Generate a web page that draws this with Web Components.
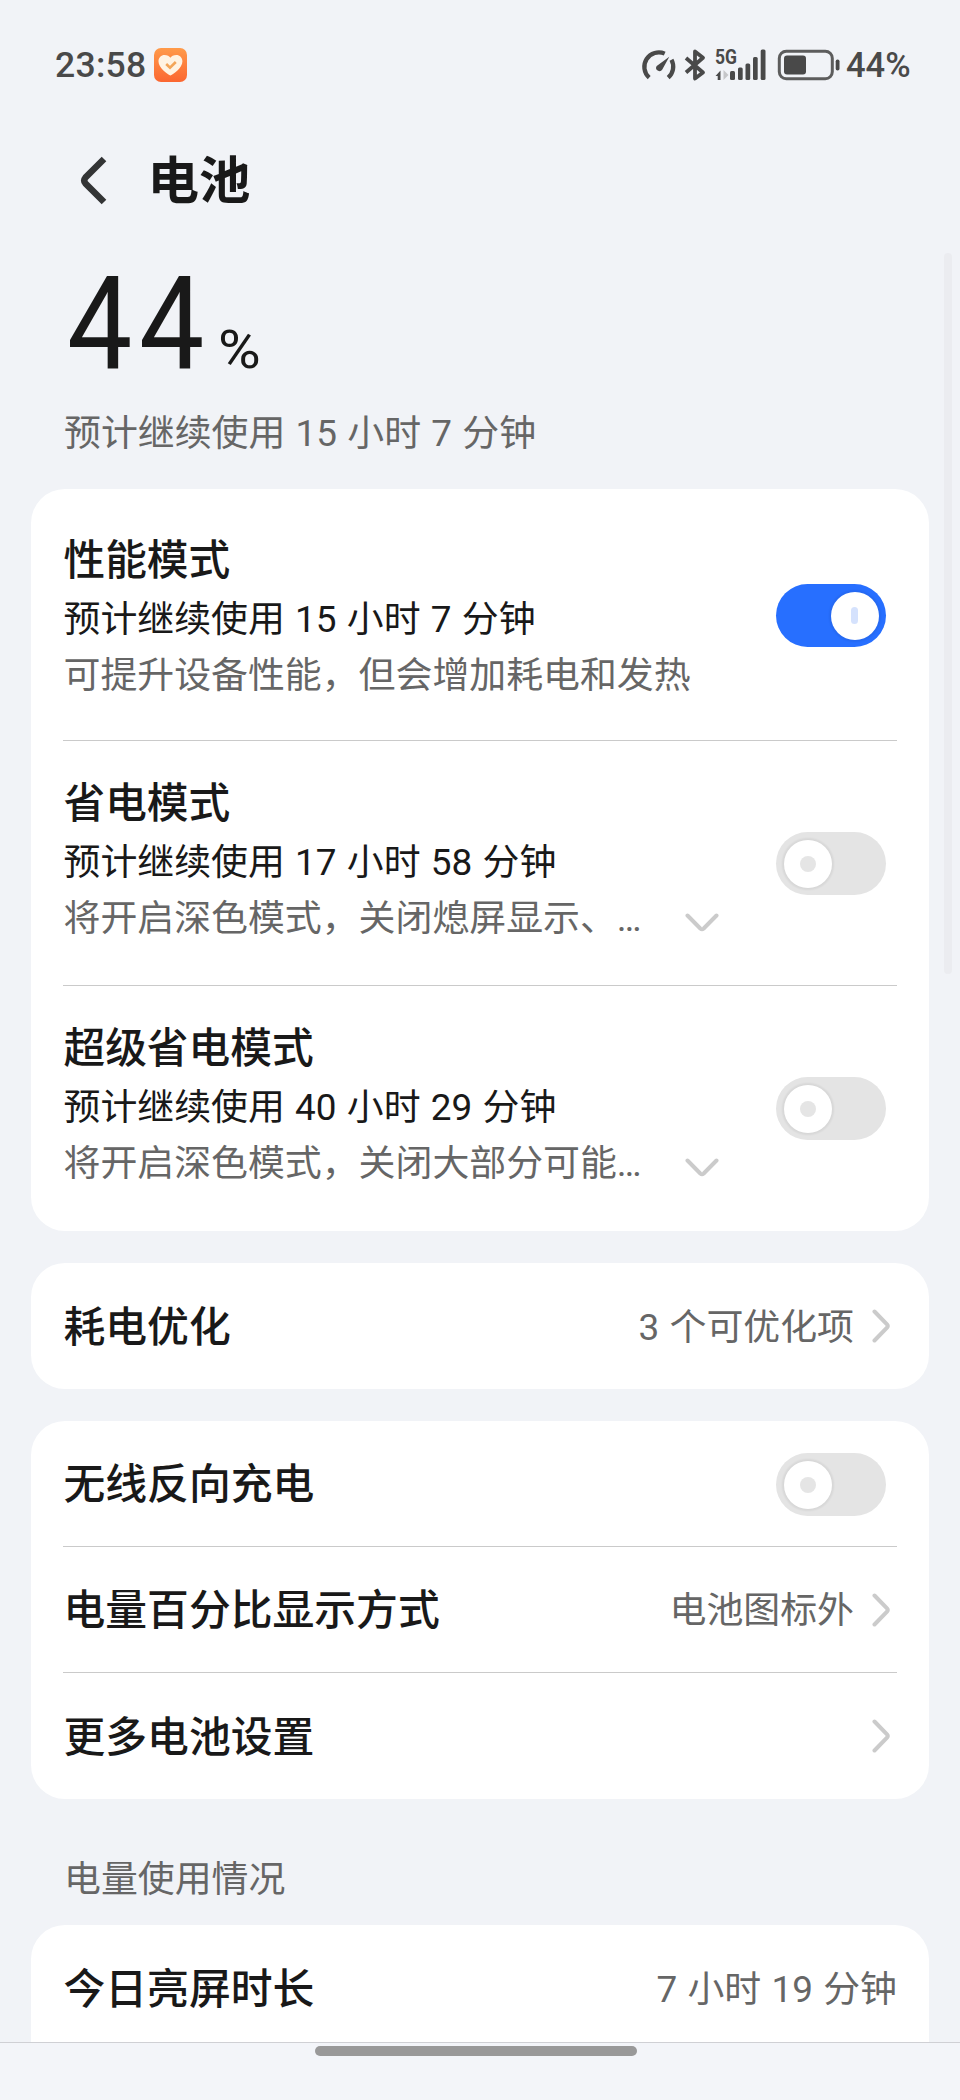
<!DOCTYPE html>
<html lang="zh-CN">
<head>
<meta charset="utf-8">
<title>电池</title>
<style>
html,body{margin:0;padding:0}
body{width:960px;height:2100px;overflow:hidden;background:#f1f3f7;color:#191919;font-family:Roboto,"Noto Sans CJK SC",sans-serif;}
</style>
</head>
<body>
<battery-page></battery-page>
<script>
const define = (name, css, html, setup) => {
  const template = document.createElement('template');
  template.innerHTML = `<style>*{box-sizing:border-box}${css}</style>${html}`;
  customElements.define(name, class extends HTMLElement {
    constructor() {
      super();
      this.attachShadow({ mode: 'open' }).append(template.content.cloneNode(true));
    }
    connectedCallback() { if (setup) setup(this, this.shadowRoot); }
  });
};

define('status-bar', `
:host{display:flex;align-items:center;height:130px;padding:0 52px 0 55px;color:#494949;font-weight:500}
.time{font-size:35.5px;line-height:40px;letter-spacing:.3px;width:99px}
.grow{flex:1}
svg{display:block;flex:none}
.pct{font-size:34.5px;line-height:40px;width:62px;white-space:nowrap}
`, `
<span class="time">23:58</span>
<svg width="33" height="34" viewBox="0 0 33 34"><defs><linearGradient id="o" x1="0" y1="0" x2="0" y2="1"><stop offset="0" stop-color="#ff9a4a"/><stop offset="1" stop-color="#fb6630"/></linearGradient></defs><rect width="33" height="34" rx="7" fill="url(#o)"/><path d="M16.4 27.6C13 26 4.500 19.500 4.500 13.500C4.500 9.500 7.300 7 10.500 7C13.200 7 15.500 8.300 16.400 9.800C17.300 8.300 19.600 7 22.300 7C25.600 7 28.400 9.500 28.400 13.500C28.400 19.500 20 26 16.400 27.600Z" fill="#fff3e2"/><path d="M12.200 16L16 19.600L21.800 14" fill="none" stroke="#f3a558" stroke-width="2.600"/></svg>
<span class="grow"></span>
<svg width="204" height="36" viewBox="642 47 204 36" fill="none" stroke="#494949" style="overflow:visible">
  <path d="M649.200 77.700A14.500 14.500 0 0 1 664.700 53.600M671.500 59.800A14.500 14.500 0 0 1 668.200 77.600" stroke-width="4.300"/>
  <path d="M669.300 56.700L662.300 69.600A3.200 3.200 0 0 1 656.700 66Z" fill="#494949" stroke="none"/>
  <path d="M686 58L703 72.500L695 78.500V51.500L703 57.800L686 72.500" stroke-width="3.800" stroke-linejoin="round"/>
  <text x="715" y="64.300" font-size="20" font-weight="700" textLength="22" lengthAdjust="spacingAndGlyphs" fill="#494949" stroke="none">5G</text>
  <path d="M715.500 76L720.500 70.500V80H717.700V76Z" fill="#494949" stroke="none"/>
  <path d="M723.500 70L728.500 75L723.500 80Z" fill="#c5c6c9" stroke="none"/>
  <g fill="#494949" stroke="none"><rect x="730" y="71" width="5" height="9" rx="1.500"/><rect x="738" y="67.500" width="4.700" height="12.500" rx="1.500"/><rect x="745.500" y="63.500" width="4.700" height="16.500" rx="1.500"/><rect x="753" y="57" width="4.700" height="23" rx="1.500"/><rect x="760.700" y="49.500" width="4.800" height="30.500" rx="1.500"/></g>
  <rect x="779.300" y="51.200" width="53" height="27.600" rx="7" stroke-width="3" stroke="#5d5d5d"/>
  <rect x="784" y="55.500" width="22" height="19" rx="3" fill="#494949" stroke="none"/>
  <rect x="835.700" y="59.500" width="3.800" height="11" rx="1.800" fill="#494949" stroke="none"/>
</svg>
<span class="pct">44%</span>`);

define('page-header', `
:host{display:flex;align-items:center;height:100px;padding:0 0 0 80px}
svg{display:block;margin-right:39.500px;margin-top:1px}
h1{margin:0;font-size:51.500px;line-height:70px;font-weight:700;padding-top:4px}
`, `<svg width="28" height="50" viewBox="0 0 28 50" fill="none" stroke="#333435" stroke-width="6.500"><path d="M24 3L5.500 21.500Q3 24.500 5.500 27.500L24 46"/></svg><h1><slot></slot></h1>`);

define('battery-level', `
:host{display:block;padding:39px 0 27px 64px}
.n{display:flex;font-size:129px;line-height:110px;align-items:baseline;height:110px;padding-left:3px}
.v{display:block;width:151px;letter-spacing:7.500px;transform:scaleX(.9);transform-origin:0 0;white-space:nowrap}
.u{display:block;font-size:53px;line-height:60px;transform:scaleX(1.1);transform-origin:0 0}
.s{margin-top:27px;font-size:36.900px;line-height:56px;color:#666;word-spacing:1.100px}
`, `<div class="n"><span class="v"><slot name="value"></slot></span><span class="u">%</span></div><div class="s"><slot></slot></div>`);

define('setting-card', `
:host{display:block;margin:0 31px 32px;background:#fff;border-radius:34px;overflow:hidden}
`, `<slot></slot>`);

define('toggle-switch', `
:host{display:flex;align-items:center;flex:none;width:110px;height:63px;border-radius:32px;background:#e4e4e4;padding:0 7.500px}
.k{display:flex;align-items:center;justify-content:center;width:48px;height:48px;border-radius:50%;background:#fff;box-shadow:0 0 2px 2px rgba(0,0,0,.06)}
.k::after{content:"";width:16px;height:16px;border-radius:8px;background:#e5e5e5}
:host([on]){background:#276fff;justify-content:flex-end}
:host([on]) .k::after{width:7px;height:17px;background:#d5e2fd}
`, `<div class="k"></div>`);

define('chevron-icon', `
:host{display:block;flex:none;width:18px;height:34px}
:host([down]){width:34px;height:19px}
svg{display:block}
.d,:host([down]) .r{display:none}
:host([down]) .d{display:block}
`, `<svg class="r" width="18" height="34" viewBox="0 0 18 34" fill="none" stroke="#cbcbcb" stroke-width="4" stroke-linecap="round"><path d="M2.500 2.500L15 15.300Q16.500 17 15 18.700L2.500 31.500"/></svg><svg class="d" width="34" height="19" viewBox="0 0 34 19" fill="none" stroke="#cbcbcb" stroke-width="4" stroke-linecap="round"><path d="M2.500 2.500L15.300 15.500Q17 17 18.700 15.500L31.500 2.500"/></svg>`);

define('mode-row', `
:host{display:block;padding:0 32px}
.r{display:flex;height:245px;padding-right:11px}
:host([line]) .r{box-sizing:content-box;height:244px;border-bottom:1px solid #cacaca;padding-right:0}
:host([first]) .r{height:251px}
.t{flex:1;padding:32px 0 0 .500px;white-space:nowrap}
:host([first]) .t{padding-top:40.500px}
.a{font-size:41.700px;line-height:62px;font-weight:500}
.b,.c{font-size:36.900px;line-height:56px;word-spacing:1.100px}
.c{color:#666;display:flex;justify-content:space-between;width:655px}
.c chevron-icon{margin-top:22px}
toggle-switch{margin:91px 11px 0 0}
:host([first]) toggle-switch{margin-top:95px}
:host(:not([line])) toggle-switch{margin-right:0}
`, `<div class="r"><div class="t"><div class="a"><slot name="title"></slot></div><div class="b"><slot name="time"></slot></div><div class="c"><span><slot></slot></span></div></div><toggle-switch></toggle-switch></div>`,
(host, root) => {
  if (host.hasAttribute('on')) root.querySelector('toggle-switch').setAttribute('on', '');
  if (host.hasAttribute('more') && !root.querySelector('chevron-icon')) {
    const icon = document.createElement('chevron-icon');
    icon.setAttribute('down', '');
    root.querySelector('.c').append(icon);
  }
});

define('setting-row', `
:host{display:block;padding:0 32px}
.r{display:flex;align-items:center;height:126px;padding-left:.500px}
:host([line]) .r{border-bottom:1px solid #cacaca}
.l{flex:1;font-size:41.800px;line-height:60px;font-weight:500;padding-top:3px;white-space:nowrap}
.v{font-size:36.900px;line-height:56px;color:#666;padding-top:3px;white-space:nowrap;word-spacing:1.100px}
chevron-icon{margin:0 7px 0 18px}
toggle-switch{margin:2px 11px 0 0}
`, `<div class="r"><div class="l"><slot></slot></div><div class="v"><slot name="value"></slot></div></div>`,
(host, root) => {
  const kind = host.getAttribute('end');
  if (kind && root.querySelector('.r').children.length < 3) root.querySelector('.r').append(document.createElement(kind));
});

define('section-label', `
:host{display:block;height:107px;padding:34px 0 0 64px;margin-top:-13px;font-size:36.900px;line-height:56px;color:#666;box-sizing:border-box}
`, `<slot></slot>`);

define('scroll-thumb', `
:host{position:absolute;left:944px;top:253px;width:8px;height:721px;border-radius:4px;background:#ebecf0}
`, ``);

define('nav-handle', `
:host{display:flex;justify-content:center;position:absolute;left:0;right:0;top:2042px;height:58px;border-top:1px solid #cfd0d4;background:#f3f5f9;padding:3px 8px 0 0;box-sizing:border-box}
i{width:322px;height:10px;border-radius:5px;background:#999}
`, `<i></i>`);

define('battery-page', `
:host{display:block;position:relative;width:960px;height:2100px;overflow:hidden}
.last{height:160px}
`, `
<status-bar></status-bar>
<page-header>电池</page-header>
<battery-level><span slot="value">44</span>预计继续使用 15 小时 7 分钟</battery-level>
<setting-card>
  <mode-row first line on><span slot="title">性能模式</span><span slot="time">预计继续使用 15 小时 7 分钟</span>可提升设备性能，但会增加耗电和发热</mode-row>
  <mode-row line more><span slot="title">省电模式</span><span slot="time">预计继续使用 17 小时 58 分钟</span>将开启深色模式，关闭熄屏显示、…</mode-row>
  <mode-row more><span slot="title">超级省电模式</span><span slot="time">预计继续使用 40 小时 29 分钟</span>将开启深色模式，关闭大部分可能…</mode-row>
</setting-card>
<setting-card>
  <setting-row end="chevron-icon">耗电优化<span slot="value">3 个可优化项</span></setting-row>
</setting-card>
<setting-card>
  <setting-row line end="toggle-switch">无线反向充电</setting-row>
  <setting-row line end="chevron-icon">电量百分比显示方式<span slot="value">电池图标外</span></setting-row>
  <setting-row end="chevron-icon">更多电池设置</setting-row>
</setting-card>
<section-label>电量使用情况</section-label>
<setting-card class="last">
  <setting-row>今日亮屏时长<span slot="value">7 小时 19 分钟</span></setting-row>
</setting-card>
<scroll-thumb></scroll-thumb>
<nav-handle></nav-handle>`);
</script>
</body>
</html>
